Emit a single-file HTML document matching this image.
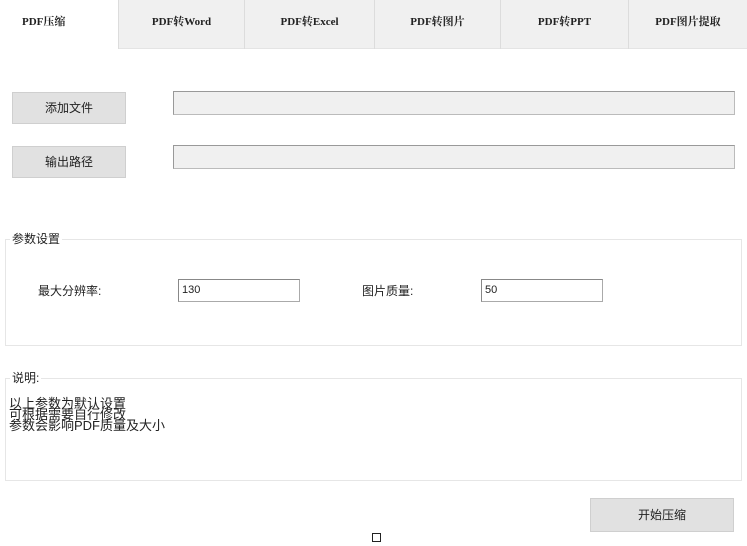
<!DOCTYPE html>
<html><head><meta charset="utf-8"><style>
*{margin:0;padding:0;box-sizing:border-box}
body{width:747px;height:546px;background:#fff;position:relative;overflow:hidden;font-family:"Liberation Sans","Noto Sans CJK SC",sans-serif;font-size:12px;color:#222}
.a{position:absolute}
.tabbar{left:118px;top:0;width:629px;height:49px;background:#f0f0f0;border-bottom:1px solid #e4e4e4}
.tab{top:0;height:49px;border-left:1px solid #dcdcdc;text-align:center;line-height:44px;font-size:11px;font-family:"Liberation Serif","Noto Serif CJK SC",serif;font-weight:bold}
.btn{background:#e1e1e1;border:1px solid #cfcfcf;text-align:center;font-size:12px}
.inp{background:#f0f0f0;border:1px solid #bbb;border-top-color:#999;border-left-color:#999}
.grp{border:1px solid #e6e6e6}
.lbl{background:#fff;padding:0 2px;font-size:12px}
.tb{background:#fff;border:1px solid #aaa;border-top-color:#888;border-left-color:#888;font-size:11px;padding-left:3px;line-height:20px}
</style></head><body>
<div class="a" style="left:22px;top:15px;font-size:11px;font-family:'Liberation Serif','Noto Serif CJK SC',serif;font-weight:bold;line-height:14px">PDF压缩</div>
<div class="a tabbar"></div>
<div class="a tab" style="left:118px;width:126px">PDF转Word</div>
<div class="a tab" style="left:244px;width:130px">PDF转Excel</div>
<div class="a tab" style="left:374px;width:126px">PDF转图片</div>
<div class="a tab" style="left:500px;width:128px">PDF转PPT</div>
<div class="a tab" style="left:628px;width:119px">PDF图片提取</div>

<div class="a btn" style="left:12px;top:92px;width:114px;height:32px;line-height:30px">添加文件</div>
<div class="a inp" style="left:173px;top:91px;width:562px;height:24px"></div>
<div class="a btn" style="left:12px;top:146px;width:114px;height:32px;line-height:30px">输出路径</div>
<div class="a inp" style="left:173px;top:145px;width:562px;height:24px"></div>

<div class="a grp" style="left:5px;top:239px;width:737px;height:107px"></div>
<div class="a lbl" style="left:10px;top:231px;line-height:16px">参数设置</div>
<div class="a" style="left:38px;top:283px;line-height:16px">最大分辨率:</div>
<div class="a tb" style="left:178px;top:279px;width:122px;height:23px">130</div>
<div class="a" style="left:362px;top:283px;line-height:16px">图片质量:</div>
<div class="a tb" style="left:481px;top:279px;width:122px;height:23px">50</div>

<div class="a grp" style="left:5px;top:378px;width:737px;height:103px"></div>
<div class="a lbl" style="left:10px;top:370px;line-height:16px">说明:</div>
<div class="a" style="left:9px;top:398px;font-size:13px;line-height:11px">以上参数为默认设置<br>可根据需要自行修改<br>参数会影响PDF质量及大小</div>

<div class="a btn" style="left:590px;top:498px;width:144px;height:34px;line-height:32px">开始压缩</div>
<div class="a" style="left:372px;top:533px;width:9px;height:9px;border:1px solid #222"></div>
</body></html>
